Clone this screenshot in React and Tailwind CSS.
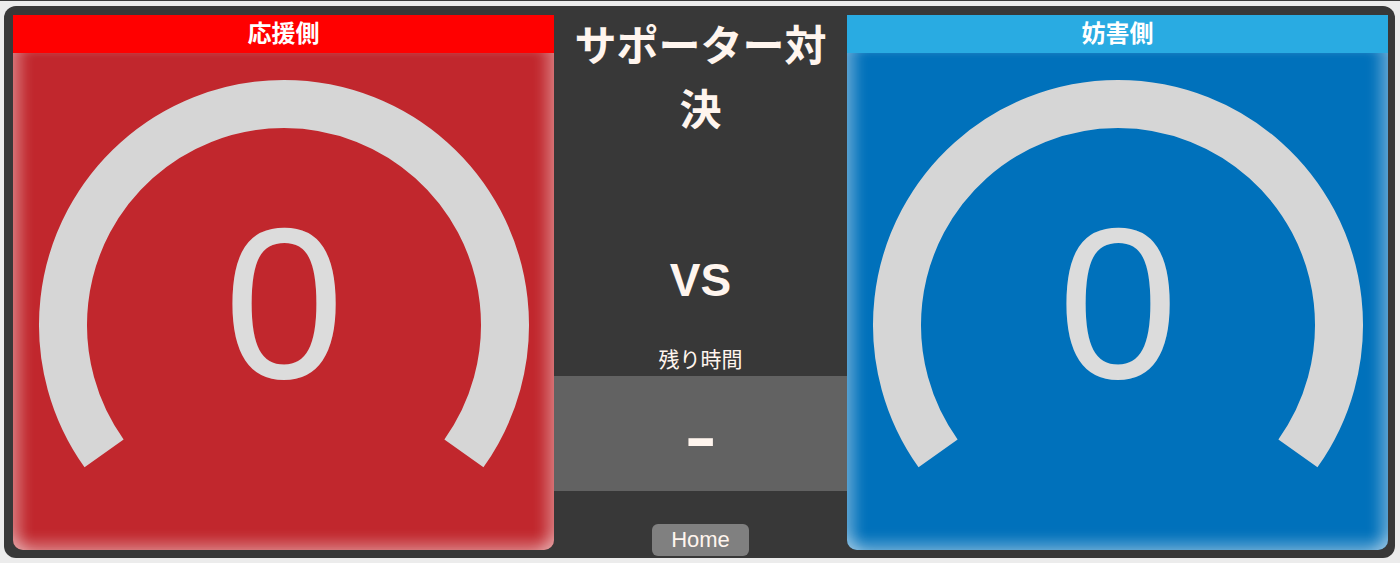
import React from 'react';

const Gauge = ({ value }) => {
  // arc spans ~251deg, open at the bottom, butt ends
  const cx = 250;
  const cy = 250;
  const r = 221;
  const a = (35.5 * Math.PI) / 180;
  const x1 = cx - r * Math.cos(a);
  const y1 = cy + r * Math.sin(a);
  const x2 = cx + r * Math.cos(a);
  const y2 = cy + r * Math.sin(a);
  return (
    <svg width="500" height="420" viewBox="0 0 500 420" className="mt-[22px] shrink-0">
      <path
        d={`M ${x1} ${y1} A ${r} ${r} 0 1 1 ${x2} ${y2}`}
        fill="none"
        stroke="#d6d6d6"
        strokeWidth="48"
      />
      <text
        x="250"
        y="303"
        textAnchor="middle"
        fill="#dcdcdc"
        fontSize="216"
        fontFamily="'Liberation Sans', Arial, sans-serif"
      >
        {value}
      </text>
    </svg>
  );
};

const SidePanel = ({ title, head, body }) => (
  <div className="w-[541px] h-[535px] shrink-0 flex flex-col">
    <div className={`h-[38px] ${head} text-white font-bold text-[24px] leading-[38px] text-center`}>
      {title}
    </div>
    <div
      className={`flex-1 ${body} rounded-b-[10px] shadow-[inset_16px_0_14px_-8px_rgba(255,255,255,0.35),inset_-16px_0_14px_-8px_rgba(255,255,255,0.35),inset_0_-16px_14px_-8px_rgba(255,255,255,0.35)] flex flex-col items-center overflow-hidden`}
    >
      <Gauge value="0" />
    </div>
  </div>
);

export default function App() {
  return (
    <div
      className="w-[1400px] h-[563px] bg-[#ececec] border-t border-[#3a3a3a] pt-[5px] overflow-hidden"
      style={{ fontFamily: "'Liberation Sans', 'Noto Sans CJK JP', sans-serif" }}
    >
      <div className="ml-[4px] w-[1391px] h-[552px] bg-[#383838] rounded-[12px] pl-[9px] pr-[7px] pt-[9px] flex items-start">
        <SidePanel title="応援側" head="bg-[#ff0000]" body="bg-[#c1272d]" />

        <div className="w-[293px] shrink-0 flex flex-col items-center text-[#fff5ee]">
          <div className="px-2 text-center font-bold text-[42px] leading-[64px]">サポーター対決</div>
          <div className="mt-[109px] font-bold text-[46px] leading-[56px]">VS</div>
          <div className="mt-[38px] text-[21px] leading-[28px]">残り時間</div>
          <div className="mt-[2px] w-full h-[115px] bg-[#626262] flex items-center justify-center">
            <span className="inline-block font-bold text-[64px] leading-none scale-x-150 mt-[6px]">-</span>
          </div>
          <button className="mt-[33px] w-[97px] h-[32px] bg-[#808080] rounded-[6px] text-[22px] leading-[32px] text-[#fff5ee]">
            Home
          </button>
        </div>

        <SidePanel title="妨害側" head="bg-[#29abe2]" body="bg-[#0071bb]" />
      </div>
    </div>
  );
}
